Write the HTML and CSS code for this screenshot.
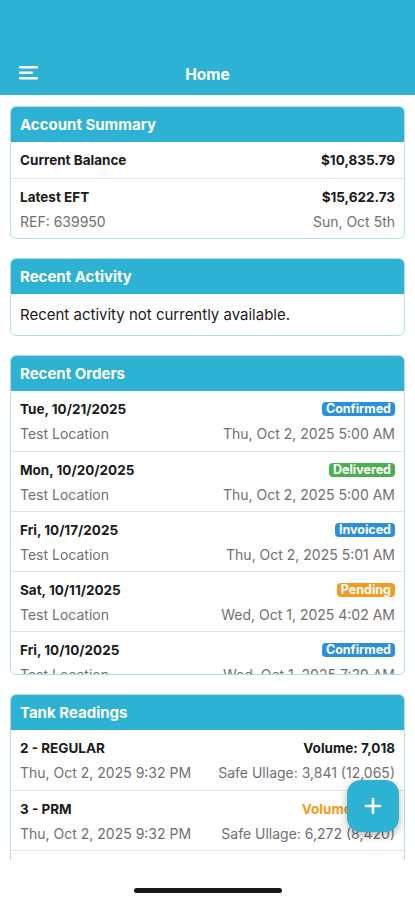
FILE: index.html
```html
<!DOCTYPE html>
<html lang="en">
<head>
    <meta charset="UTF-8">
    <title>Home</title>
    <link rel="stylesheet" href="styles.css">
</head>
<body>
    <div class="app">
        <header class="topbar">
            <div class="nav">
                <svg class="menu-icon" width="20" height="14" viewBox="0 0 20 14">
                    <rect x="0" y="0" width="19" height="2.4" rx="1" fill="#fff"/>
                    <rect x="0" y="5.5" width="14" height="2.4" rx="1" fill="#fff"/>
                    <rect x="0" y="11" width="19" height="2.4" rx="1" fill="#fff"/>
                </svg>
                <h1 class="nav-title">Home</h1>
            </div>
        </header>

        <main class="content">
            <section class="card">
                <h2 class="card-head">Account Summary</h2>
                <div class="row row--single">
                    <span class="strong">Current Balance</span>
                    <span class="strong">$10,835.79</span>
                </div>
                <div class="row">
                    <div class="line">
                        <span class="strong">Latest EFT</span>
                        <span class="strong">$15,622.73</span>
                    </div>
                    <div class="line muted">
                        <span>REF: 639950</span>
                        <span>Sun, Oct 5th</span>
                    </div>
                </div>
            </section>

            <section class="card">
                <h2 class="card-head">Recent Activity</h2>
                <div class="row row--note">Recent activity not currently available.</div>
            </section>

            <section class="card card--orders">
                <h2 class="card-head">Recent Orders</h2>
                <div class="card-scroll">
                    <div class="row">
                        <div class="line">
                            <span class="strong">Tue, 10/21/2025</span>
                            <span class="badge badge--blue">Confirmed</span>
                        </div>
                        <div class="line muted">
                            <span>Test Location</span>
                            <span>Thu, Oct 2, 2025 5:00 AM</span>
                        </div>
                    </div>
                    <div class="row">
                        <div class="line">
                            <span class="strong">Mon, 10/20/2025</span>
                            <span class="badge badge--green">Delivered</span>
                        </div>
                        <div class="line muted">
                            <span>Test Location</span>
                            <span>Thu, Oct 2, 2025 5:00 AM</span>
                        </div>
                    </div>
                    <div class="row">
                        <div class="line">
                            <span class="strong">Fri, 10/17/2025</span>
                            <span class="badge badge--blue">Invoiced</span>
                        </div>
                        <div class="line muted">
                            <span>Test Location</span>
                            <span>Thu, Oct 2, 2025 5:01 AM</span>
                        </div>
                    </div>
                    <div class="row">
                        <div class="line">
                            <span class="strong">Sat, 10/11/2025</span>
                            <span class="badge badge--orange">Pending</span>
                        </div>
                        <div class="line muted">
                            <span>Test Location</span>
                            <span>Wed, Oct 1, 2025 4:02 AM</span>
                        </div>
                    </div>
                    <div class="row">
                        <div class="line">
                            <span class="strong">Fri, 10/10/2025</span>
                            <span class="badge badge--blue">Confirmed</span>
                        </div>
                        <div class="line muted">
                            <span>Test Location</span>
                            <span>Wed, Oct 1, 2025 7:39 AM</span>
                        </div>
                    </div>
                </div>
            </section>

            <section class="card">
                <h2 class="card-head">Tank Readings</h2>
                <div class="row">
                    <div class="line">
                        <span class="strong">2 - REGULAR</span>
                        <span class="strong">Volume: 7,018</span>
                    </div>
                    <div class="line muted">
                        <span>Thu, Oct 2, 2025 9:32 PM</span>
                        <span>Safe Ullage: 3,841 (12,065)</span>
                    </div>
                </div>
                <div class="row">
                    <div class="line">
                        <span class="strong">3 - PRM</span>
                        <span class="strong warn">Volume: 2,148</span>
                    </div>
                    <div class="line muted">
                        <span>Thu, Oct 2, 2025 9:32 PM</span>
                        <span>Safe Ullage: 6,272 (8,420)</span>
                    </div>
                </div>
                <div class="row"></div>
            </section>
        </main>

        <div class="home-bar"><span class="home-indicator"></span></div>

        <button class="fab" aria-label="Add">
            <svg width="18" height="18" viewBox="0 0 18 18">
                <path d="M9 2v14M2 9h14" stroke="#fff" stroke-width="2.6" stroke-linecap="round"/>
            </svg>
        </button>
    </div>
</body>
</html>
```

FILE: styles.css
```css
* {
    margin: 0;
    padding: 0;
    box-sizing: border-box;
}

body {
    width: 415px;
    height: 900px;
    overflow: hidden;
    background-color: #fff;
    font-family: Inter, "Liberation Sans", sans-serif;
    font-size: 14px;
    color: #1b1b1b;
}

.app {
    position: relative;
    height: 900px;
    display: flex;
    flex-direction: column;
}

/* Header */
.topbar {
    height: 95px;
    flex-shrink: 0;
    background-color: #2eb2d3;
    display: flex;
    align-items: flex-end;
}

.nav {
    position: relative;
    width: 100%;
    height: 40px;
    display: flex;
    align-items: center;
    justify-content: center;
}

.menu-icon {
    position: absolute;
    left: 19px;
    top: 11px;
}

.nav-title {
    font-size: 15.5px;
    font-weight: 700;
    color: #fff;
    margin-top: -1px;
}

/* Content */
.content {
    flex: 1;
    overflow: hidden;
    padding: 11px 10px 0;
    display: flex;
    flex-direction: column;
    gap: 19px;
}

.card {
    flex-shrink: 0;
    border: 1px solid #b7dce8;
    border-radius: 6px;
    overflow: hidden;
    background-color: #fff;
}

.card-head {
    height: 35px;
    display: flex;
    align-items: center;
    padding: 0 9px;
    background-color: #2eb2d3;
    color: #fff;
    font-size: 15px;
    font-weight: 700;
}

.card--orders .card-scroll {
    height: 283px;
    overflow: hidden;
}

.row {
    height: 60px;
    padding: 7px 9px 0;
    border-top: 1px solid #dfe3e6;
    display: flex;
    flex-direction: column;
    gap: 2px;
}

.card-head + .row,
.card-scroll > .row:first-child {
    border-top: none;
}

.row--single {
    height: 36px;
    padding-top: 0;
    flex-direction: row;
    align-items: center;
    justify-content: space-between;
}

.row--note {
    height: 41px;
    padding-top: 0;
    justify-content: center;
    font-size: 15px;
}

.line {
    height: 22px;
    display: flex;
    align-items: center;
    justify-content: space-between;
}

.strong {
    font-weight: 700;
    font-size: 13.5px;
}

.muted {
    color: #707070;
    font-size: 14px;
}

.warn {
    color: #f29a1f;
}

.badge {
    font-size: 12.5px;
    font-weight: 700;
    color: #fff;
    line-height: 14px;
    padding: 0 4px;
    border-radius: 4px;
}

.badge--blue {
    background-color: #2b90dc;
}

.badge--green {
    background-color: #4cae4f;
}

.badge--orange {
    background-color: #f39c1f;
}

/* Bottom */
.home-bar {
    height: 40px;
    flex-shrink: 0;
    display: flex;
    justify-content: center;
    padding-top: 28px;
}

.home-indicator {
    width: 148px;
    height: 5px;
    border-radius: 3px;
    background-color: #1a1a1a;
}

.fab {
    position: absolute;
    right: 16px;
    bottom: 68px;
    width: 52px;
    height: 52px;
    border: none;
    border-radius: 14px;
    background-color: #2eb2d3;
    box-shadow: 0 3px 8px rgba(0, 0, 0, 0.3);
    display: flex;
    align-items: center;
    justify-content: center;
}
```
